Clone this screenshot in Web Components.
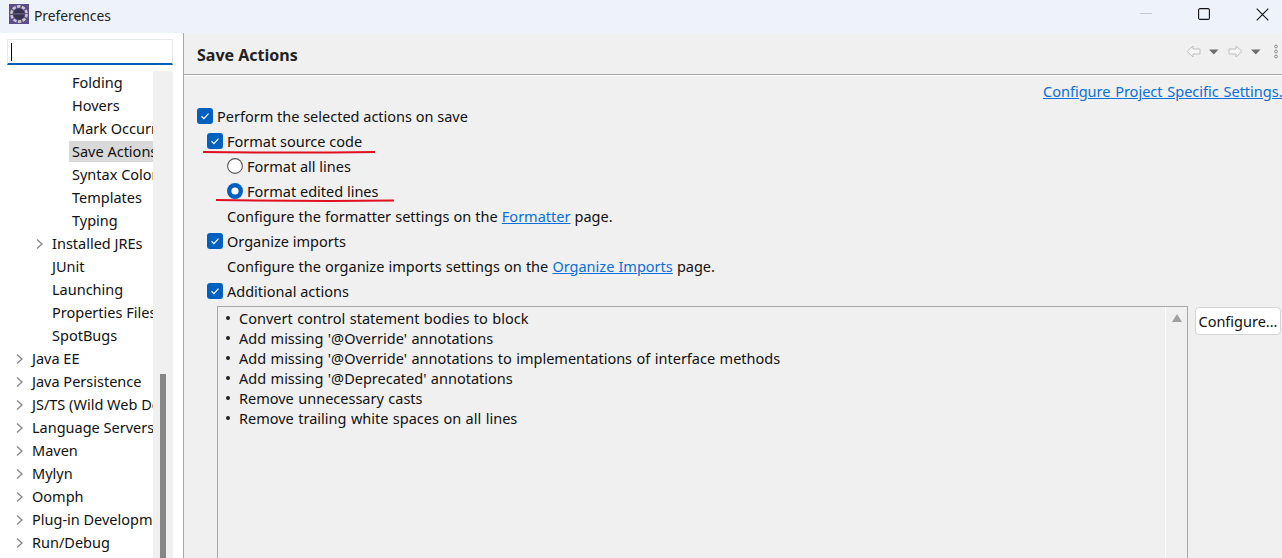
<!DOCTYPE html>
<html>
<head>
<meta charset="utf-8">
<style>
  html, body { margin: 0; padding: 0; height: 100%; overflow: hidden; }
  body { font-family: 'Noto Sans', 'Noto Sans CJK KR', sans-serif; font-size: 14.5px; color: #111; }
</style>
</head>
<body>
<pref-window></pref-window>
<script>
const CHECK = `<svg width="16" height="16" viewBox="0 0 16 16"><rect width="16" height="16" rx="3" fill="#0060c0"/><path d="M4.5 8.3l2.4 2.3 4.6-5" fill="none" stroke="#fff" stroke-width="1.2"/></svg>`

class TitleBar extends HTMLElement {
  constructor () {
    super()
    this.attachShadow({ mode: 'open' }).innerHTML = `
      <style>
        :host { display: flex; align-items: center; height: 33px; background: #eef3fb; padding-left: 9px; }
        .icon { width: 20px; height: 20px; margin-right: 5px; margin-top: -5px; }
        .title { flex: 1; font-size: 13.8px; color: #222; margin-top: -3px; }
        .btns { display: flex; align-items: center; margin-top: -5px; margin-right: -10px; }
        .b { width: 58.5px; height: 20px; display: flex; align-items: center; justify-content: center; }
      </style>
      <svg class="icon" viewBox="0 0 20 20">
        <rect width="20" height="20" fill="#5c4d86"/>
        <circle cx="10" cy="10" r="7.6" fill="none" stroke="#c9c9c9" stroke-width="2.6" stroke-dasharray="3.4 1.4"/>
        <circle cx="10" cy="10" r="5.6" fill="#37334f"/>
        <rect x="4.5" y="9.4" width="11" height="1" fill="#77738f"/>
      </svg>
      <div class="title">Preferences</div>
      <div class="btns">
        <div class="b"><svg width="12" height="2"><rect width="12" height="1" fill="#c4c8d0"/></svg></div>
        <div class="b"><svg width="12" height="12"><rect x=".6" y=".6" width="10.8" height="10.8" rx="1.5" fill="none" stroke="#111" stroke-width="1.1"/></svg></div>
        <div class="b"><svg width="13" height="13"><path d="M.7.7l11.6 11.6M12.3.7L.7 12.3" stroke="#111" stroke-width="1.1"/></svg></div>
      </div>`
  }
}

class TreeRow extends HTMLElement {
  constructor () {
    super()
    const depth = Number(this.getAttribute('depth') || 0)
    const arrow = this.hasAttribute('arrow')
    const sel = this.hasAttribute('selected')
    this.attachShadow({ mode: 'open' }).innerHTML = `
      <style>
        :host { display: flex; align-items: center; height: 23px; white-space: nowrap; padding-left: ${5 + depth * 20}px; }
        .a { width: 20px; flex: none; display: flex; align-items: center; }
        .t { padding: 0 3px; height: 21px; line-height: 20px; margin-left: -3px; ${sel ? 'background:#d9d9d9;' : ''} flex: ${sel ? '1' : 'none'}; }
      </style>
      <div class="a">${arrow ? '<svg width="12" height="12"><path d="M5 1.5l5 4.5-5 4.5" fill="none" stroke="#8a8a8a" stroke-width="1.4"/></svg>' : ''}</div>
      <div class="t"><slot></slot></div>`
  }
}

class TreePanel extends HTMLElement {
  constructor () {
    super()
    this.attachShadow({ mode: 'open' }).innerHTML = `
      <style>
        :host { display: flex; flex-direction: column; flex: none; width: 184px; box-sizing: border-box; background: #fff; border-right: 1px solid #a8a8a8; padding: 6px 10px 0 7px; overflow: hidden; }
        .search { flex: none; height: 26px; box-sizing: border-box; border: 1px solid #e6e8ec; border-bottom: 2px solid #0060b8; padding: 3px 3px; }
        .caret { width: 1px; height: 18px; background: #000; }
        .body { flex: 1; display: flex; margin-top: 6px; min-height: 0; }
        .list { width: 146px; overflow: hidden; flex: none; }
        .track { flex: 1; background: #f0f0f0; position: relative; }
        .thumb { position: absolute; left: 7px; width: 6px; top: 303px; bottom: 0; background: #868686; }
      </style>
      <div class="search"><div class="caret"></div></div>
      <div class="body">
        <div class="list"><slot></slot></div>
        <div class="track"><div class="thumb"></div></div>
      </div>`
  }
}

class NavButtons extends HTMLElement {
  constructor () {
    super()
    const drop = '<svg width="10" height="6"><path d="M0 .5h9.5L4.8 5.5z" fill="#6e6e6e"/></svg>'
    this.attachShadow({ mode: 'open' }).innerHTML = `
      <style>
        :host { display: flex; align-items: center; gap: 8px; margin-top: -6px; }
        .next { margin-left: 1px; }
        .dots { margin-left: 5px; }
      </style>
      <svg width="15" height="13"><path d="M7 1L1 6.5 7 12V9h7V4H7z" fill="#f6f6f6" stroke="#bdbdbd"/></svg>
      ${drop}
      <svg class="next" width="15" height="13"><path d="M8 1l6 5.5L8 12V9H1V4h7z" fill="#f6f6f6" stroke="#bdbdbd"/></svg>
      ${drop}
      <svg class="dots" width="4" height="15"><g fill="none" stroke="#8a8a8a"><circle cx="2" cy="2.5" r="1.4"/><circle cx="2" cy="7.5" r="1.4"/><circle cx="2" cy="12.5" r="1.4"/></g></svg>`
  }
}

class CheckRow extends HTMLElement {
  constructor () {
    super()
    const indent = Number(this.getAttribute('indent') || 0)
    this.attachShadow({ mode: 'open' }).innerHTML = `
      <style>
        :host { display: flex; align-items: center; height: 25px; gap: 4px; padding-left: ${indent}px; white-space: nowrap; }
        svg { flex: none; }
      </style>
      ${CHECK}<span><slot></slot></span>`
  }
}

class RadioRow extends HTMLElement {
  constructor () {
    super()
    const on = this.hasAttribute('checked')
    const mark = on
      ? '<circle cx="8" cy="8" r="8" fill="#0060c0"/><circle cx="8" cy="8" r="3.6" fill="#fff"/>'
      : '<circle cx="8" cy="8" r="7.4" fill="#fff" stroke="#555" stroke-width="1.1"/>'
    this.attachShadow({ mode: 'open' }).innerHTML = `
      <style>
        :host { display: flex; align-items: center; height: 25px; gap: 4px; padding-left: 30px; white-space: nowrap; }
      </style>
      <svg width="16" height="16">${mark}</svg><span><slot></slot></span>`
  }
}

class HintRow extends HTMLElement {
  constructor () {
    super()
    this.attachShadow({ mode: 'open' }).innerHTML = `
      <style>
        :host { display: flex; align-items: center; height: 25px; padding-left: 30px; white-space: pre; word-spacing: .35px; }
        ::slotted(a) { color: #0a6fd8; text-decoration: underline; }
      </style>
      <slot></slot>`
  }
}

class ActionList extends HTMLElement {
  constructor () {
    super()
    this.attachShadow({ mode: 'open' }).innerHTML = `
      <style>
        :host { display: flex; flex: 1; min-height: 0; margin: 3px 0 0 20px; gap: 7px; }
        .box { flex: none; width: 971px; height: 300px; box-sizing: border-box; border: 1px solid #a8a8a8; display: flex; }
        .items { flex: 1; padding: 1px 0 0 8px; }
        .bar { width: 22px; flex: none; border-left: 1px solid #fff; display: flex; justify-content: center; padding-top: 7px; box-sizing: border-box; }
        button { all: unset; font: inherit; height: 28px; width: 86px; box-sizing: border-box; text-align: center; line-height: 27px; background: #fff; border: 1px solid #d4d4d4; border-radius: 4px; margin-top: 1px; }
      </style>
      <div class="box">
        <div class="items"><slot></slot></div>
        <div class="bar"><svg width="10" height="8"><path d="M5 0l5 8H0z" fill="#a0a0a0"/></svg></div>
      </div>
      <button>Configure...</button>`
  }
}

class ActionItem extends HTMLElement {
  constructor () {
    super()
    this.attachShadow({ mode: 'open' }).innerHTML = `
      <style>
        :host { display: flex; align-items: center; height: 20px; white-space: nowrap; word-spacing: .7px; }
        i { width: 4px; height: 4px; border-radius: 50%; background: #222; margin-right: 9px; }
      </style>
      <i></i><span><slot></slot></span>`
  }
}

class SavePage extends HTMLElement {
  constructor () {
    super()
    this.attachShadow({ mode: 'open' }).innerHTML = `
      <style>
        :host { display: flex; flex-direction: column; flex: 1; min-width: 0; background: #f0f0f0; position: relative; overflow: hidden; }
        header { flex: none; height: 41px; padding: 1px 4px 0 13px; box-sizing: border-box; border-bottom: 1px solid #a8a8a8; box-shadow: 0 1px 0 #fff; display: flex; align-items: center; justify-content: space-between; margin-top: 1px; }
        h1 { margin: 0; font-size: 16px; font-weight: 700; color: #222; }
        .link { flex: none; height: 28px; box-sizing: border-box; padding-top: 6px; line-height: 20px; overflow: hidden; display: flex; white-space: nowrap; margin-left: 859px; word-spacing: 1px; }
        .link span { color: #0a6fd8; text-decoration: underline; }
        .form { flex: 1; padding-left: 13px; min-height: 0; }
        .notes { position: absolute; left: 0; top: 0; pointer-events: none; }
      </style>
      <header><h1>Save Actions</h1><nav-buttons></nav-buttons></header>
      <div class="link"><span>Configure Project Specific Settings...</span></div>
      <div class="form"><slot></slot></div>
      <svg class="notes" width="500" height="220">
        <path d="M19 119q85 1 172 0" fill="none" stroke="#e01020" stroke-width="2"/>
        <path d="M32 167q90 1.4 178 .6" fill="none" stroke="#e01020" stroke-width="2"/>
      </svg>`
  }
}

class PrefWindow extends HTMLElement {
  constructor () {
    super()
    this.attachShadow({ mode: 'open' }).innerHTML = `
      <style>
        :host { display: flex; flex-direction: column; width: 1282px; height: 558px; overflow: hidden; }
        .main { flex: 1; display: flex; min-height: 0; }
      </style>
      <title-bar></title-bar>
      <div class="main">
        <tree-panel>
          <tree-row depth="2">Folding</tree-row>
          <tree-row depth="2">Hovers</tree-row>
          <tree-row depth="2">Mark Occurrences</tree-row>
          <tree-row depth="2" selected>Save Actions</tree-row>
          <tree-row depth="2">Syntax Coloring</tree-row>
          <tree-row depth="2">Templates</tree-row>
          <tree-row depth="2">Typing</tree-row>
          <tree-row depth="1" arrow>Installed JREs</tree-row>
          <tree-row depth="1">JUnit</tree-row>
          <tree-row depth="1">Launching</tree-row>
          <tree-row depth="1">Properties Files Editor</tree-row>
          <tree-row depth="1">SpotBugs</tree-row>
          <tree-row arrow>Java EE</tree-row>
          <tree-row arrow>Java Persistence</tree-row>
          <tree-row arrow>JS/TS (Wild Web Developer)</tree-row>
          <tree-row arrow>Language Servers</tree-row>
          <tree-row arrow>Maven</tree-row>
          <tree-row arrow>Mylyn</tree-row>
          <tree-row arrow>Oomph</tree-row>
          <tree-row arrow>Plug-in Development</tree-row>
          <tree-row arrow>Run/Debug</tree-row>
        </tree-panel>
        <save-page>
          <check-row>Perform the selected actions on save</check-row>
          <check-row indent="10">Format source code</check-row>
          <radio-row>Format all lines</radio-row>
          <radio-row checked>Format edited lines</radio-row>
          <hint-row>Configure the formatter settings on the <a>Formatter</a> page.</hint-row>
          <check-row indent="10">Organize imports</check-row>
          <hint-row>Configure the organize imports settings on the <a>Organize Imports</a> page.</hint-row>
          <check-row indent="10">Additional actions</check-row>
          <action-list>
            <action-item>Convert control statement bodies to block</action-item>
            <action-item>Add missing '@Override' annotations</action-item>
            <action-item>Add missing '@Override' annotations to implementations of interface methods</action-item>
            <action-item>Add missing '@Deprecated' annotations</action-item>
            <action-item>Remove unnecessary casts</action-item>
            <action-item>Remove trailing white spaces on all lines</action-item>
          </action-list>
        </save-page>
      </div>`
  }
}

customElements.define('title-bar', TitleBar)
customElements.define('tree-row', TreeRow)
customElements.define('tree-panel', TreePanel)
customElements.define('nav-buttons', NavButtons)
customElements.define('check-row', CheckRow)
customElements.define('radio-row', RadioRow)
customElements.define('hint-row', HintRow)
customElements.define('action-list', ActionList)
customElements.define('action-item', ActionItem)
customElements.define('save-page', SavePage)
customElements.define('pref-window', PrefWindow)
</script>
</body>
</html>
